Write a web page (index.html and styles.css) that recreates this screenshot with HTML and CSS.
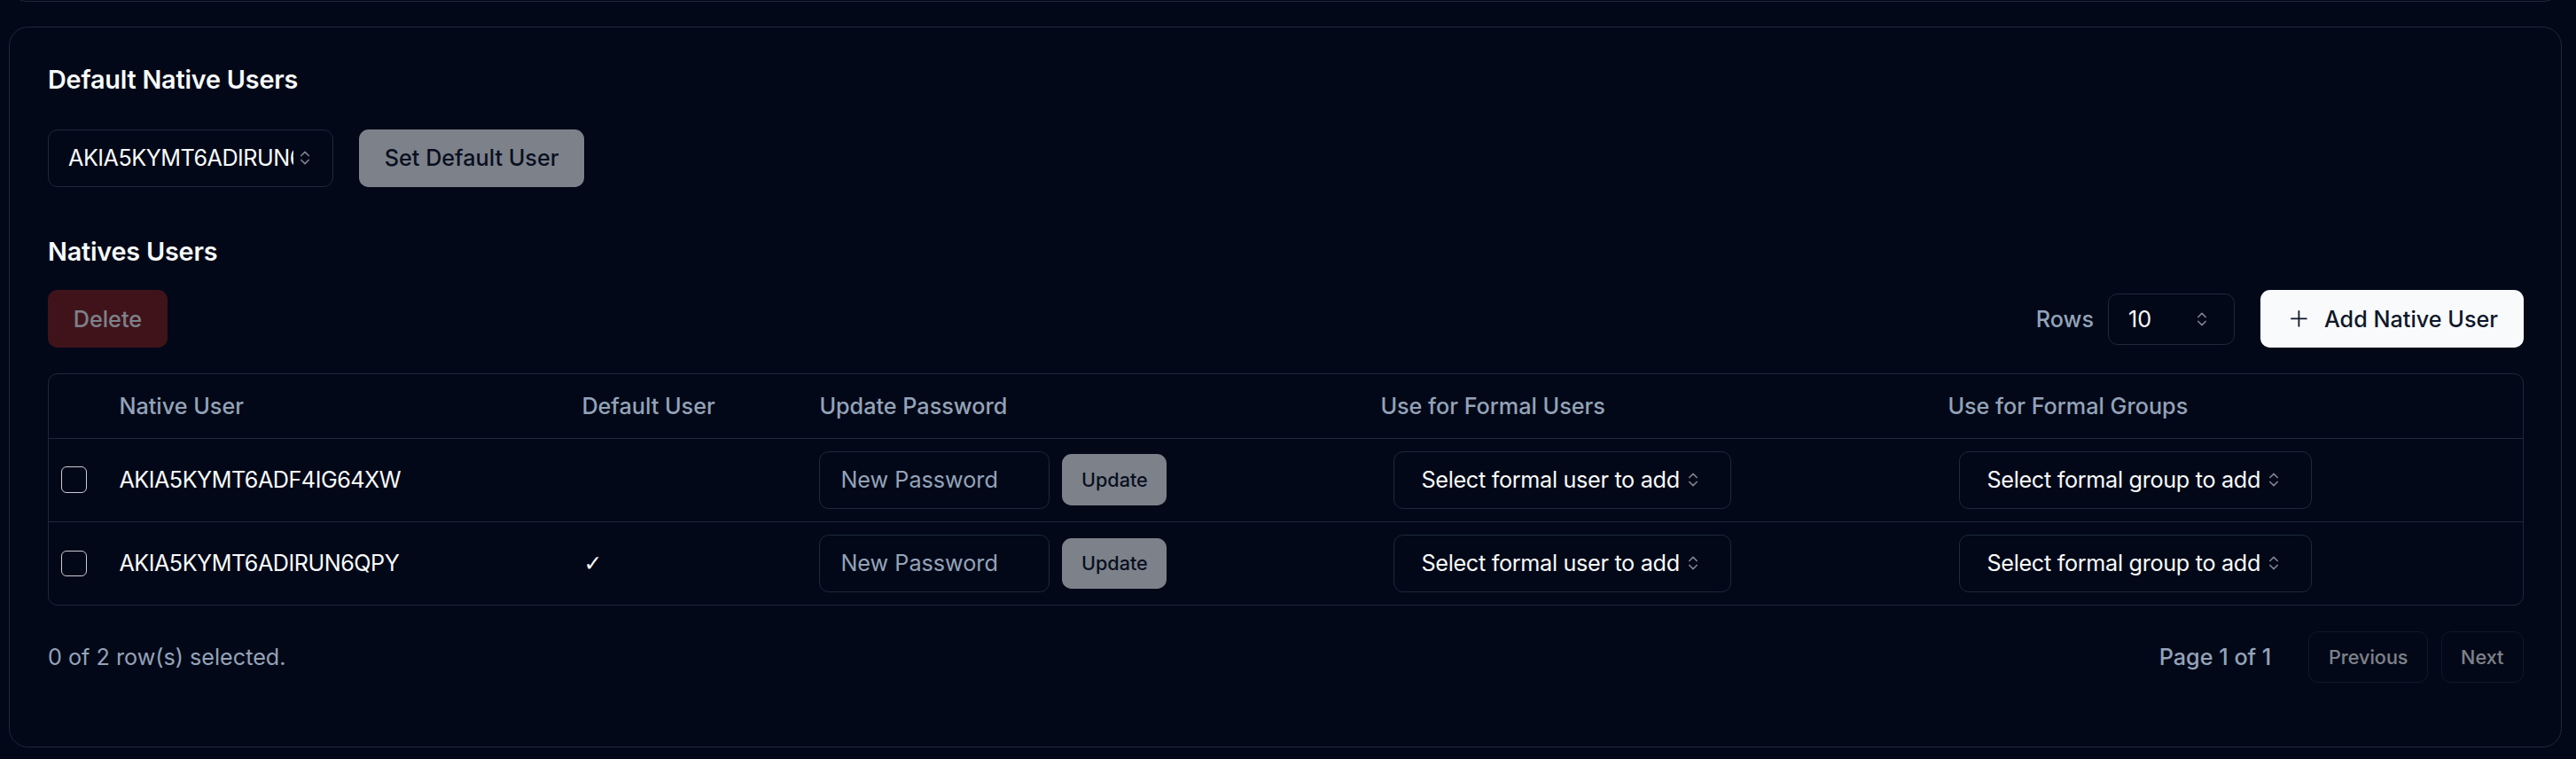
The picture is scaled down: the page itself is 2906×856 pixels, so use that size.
FILE: index.html
```html
<!DOCTYPE html>
<html lang="en">
<head>
<meta charset="utf-8">
<title>Native Users</title>
<link rel="stylesheet" href="styles.css">
</head>
<body>
<div class="page">
  <div class="prev-card"></div>
  <section class="card">
    <h2 class="card-title">Default Native Users</h2>
    <div class="default-row">
      <div class="select select-default">
        <span class="select-value id-text">AKIA5KYMT6ADIRUN6QPY</span>
        <svg class="chev" viewBox="0 0 24 24" fill="none" stroke="currentColor" stroke-width="2" stroke-linecap="round" stroke-linejoin="round"><path d="m7 15 5 5 5-5"/><path d="m7 9 5-5 5 5"/></svg>
      </div>
      <button class="btn btn-primary is-disabled">Set Default User</button>
    </div>

    <h2 class="card-title section-title">Natives Users</h2>
    <div class="toolbar">
      <button class="btn btn-destructive is-disabled">Delete</button>
      <div class="toolbar-right">
        <span class="rows-label">Rows</span>
        <div class="select select-rows">
          <span>10</span>
          <svg class="chev" viewBox="0 0 24 24" fill="none" stroke="currentColor" stroke-width="2" stroke-linecap="round" stroke-linejoin="round"><path d="m7 15 5 5 5-5"/><path d="m7 9 5-5 5 5"/></svg>
        </div>
        <button class="btn btn-white">
          <svg class="plus" viewBox="0 0 24 24" fill="none" stroke="currentColor" stroke-width="1.5" stroke-linecap="round"><path d="M5 12h14"/><path d="M12 5v14"/></svg>
          <span>Add Native User</span>
        </button>
      </div>
    </div>

    <div class="table-wrap">
      <table class="table">
        <colgroup>
          <col class="c-check"><col class="c-user"><col class="c-default"><col class="c-pass"><col class="c-fusers"><col>
        </colgroup>
        <thead>
          <tr>
            <th></th>
            <th>Native User</th>
            <th>Default User</th>
            <th>Update Password</th>
            <th>Use for Formal Users</th>
            <th>Use for Formal Groups</th>
          </tr>
        </thead>
        <tbody>
          <tr>
            <td><span class="checkbox"></span></td>
            <td class="id-text">AKIA5KYMT6ADF4IG64XW</td>
            <td></td>
            <td>
              <div class="pass-cell">
                <input class="input" type="password" placeholder="New Password">
                <button class="btn btn-sm btn-primary is-disabled">Update</button>
              </div>
            </td>
            <td>
              <div class="select select-formal select-fusers">
                <span>Select formal user to add</span>
                <svg class="chev" viewBox="0 0 24 24" fill="none" stroke="currentColor" stroke-width="2" stroke-linecap="round" stroke-linejoin="round"><path d="m7 15 5 5 5-5"/><path d="m7 9 5-5 5 5"/></svg>
              </div>
            </td>
            <td>
              <div class="select select-formal select-fgroups">
                <span>Select formal group to add</span>
                <svg class="chev" viewBox="0 0 24 24" fill="none" stroke="currentColor" stroke-width="2" stroke-linecap="round" stroke-linejoin="round"><path d="m7 15 5 5 5-5"/><path d="m7 9 5-5 5 5"/></svg>
              </div>
            </td>
          </tr>
          <tr>
            <td><span class="checkbox"></span></td>
            <td class="id-text">AKIA5KYMT6ADIRUN6QPY</td>
            <td><span class="tick">✓</span></td>
            <td>
              <div class="pass-cell">
                <input class="input" type="password" placeholder="New Password">
                <button class="btn btn-sm btn-primary is-disabled">Update</button>
              </div>
            </td>
            <td>
              <div class="select select-formal select-fusers">
                <span>Select formal user to add</span>
                <svg class="chev" viewBox="0 0 24 24" fill="none" stroke="currentColor" stroke-width="2" stroke-linecap="round" stroke-linejoin="round"><path d="m7 15 5 5 5-5"/><path d="m7 9 5-5 5 5"/></svg>
              </div>
            </td>
            <td>
              <div class="select select-formal select-fgroups">
                <span>Select formal group to add</span>
                <svg class="chev" viewBox="0 0 24 24" fill="none" stroke="currentColor" stroke-width="2" stroke-linecap="round" stroke-linejoin="round"><path d="m7 15 5 5 5-5"/><path d="m7 9 5-5 5 5"/></svg>
              </div>
            </td>
          </tr>
        </tbody>
      </table>
    </div>

    <div class="footer">
      <span class="muted">0 of 2 row(s) selected.</span>
      <div class="pager">
        <span class="page-info">Page 1 of 1</span>
        <div class="pager-buttons">
          <button class="btn btn-sm btn-outline is-disabled">Previous</button>
          <button class="btn btn-sm btn-outline is-disabled">Next</button>
        </div>
      </div>
    </div>
  </section>
</div>
</body>
</html>
```

FILE: styles.css
```css
* { box-sizing: border-box; }

html, body {
  margin: 0;
  background: #020817;
  color: #f8fafc;
  font-family: Inter, "Noto Sans", sans-serif;
  font-size: 25.2px;
  overflow: hidden;
}

.page {
  padding: 0 16px 0 10px;
  display: flex;
  flex-direction: column;
}

.prev-card {
  height: 41px;
  margin-top: -39px;
  margin-bottom: 28px;
  border: 1px solid #1e293b;
  border-radius: 21.6px;
}

.card {
  border: 1px solid #1e293b;
  border-radius: 21.6px;
  padding: 45px 42px 43px 43px;
  display: flex;
  flex-direction: column;
}

.card-title {
  margin: 0;
  font-size: 28.8px;
  line-height: 1;
  font-weight: 600;
  letter-spacing: -0.2px;
}

.section-title { margin-top: 59px; }

.default-row {
  margin-top: 41px;
  display: flex;
  gap: 29px;
  align-items: center;
}

.id-text { letter-spacing: -0.5px; }

/* Buttons */
.btn {
  font-family: inherit;
  font-size: 25.2px;
  font-weight: 500;
  height: 64.8px;
  padding: 0 28.8px;
  border: none;
  border-radius: 10.8px;
  display: inline-flex;
  align-items: center;
  justify-content: center;
  white-space: nowrap;
}
.btn-sm {
  height: 57.6px;
  padding: 0 21.6px;
  font-size: 21.6px;
}
.btn-primary { background: #f8fafc; color: #0f172a; }
.btn-white { background: #f8fafc; color: #0f172a; padding: 0 29px 0 28.8px; gap: 14.4px; }
.btn-destructive { background: #7f1d1d; color: #f8fafc; }
.btn-outline { background: transparent; border: 1px solid #1e293b; color: #f8fafc; }
.is-disabled { opacity: 0.5; }

.plus { width: 28.8px; height: 28.8px; }

/* Selects */
.select {
  height: 64.8px;
  border: 1px solid #1e293b;
  border-radius: 10.8px;
  display: flex;
  align-items: center;
  color: #f8fafc;
  white-space: nowrap;
}
.chev {
  width: 20px;
  height: 20px;
  flex: none;
  color: #f8fafc;
  opacity: 0.5;
}
.select-default {
  width: 322px;
  padding: 0 22px;
  gap: 3px;
}
.select-value {
  width: 254px;
  overflow: hidden;
  flex: none;
}
.select-rows {
  width: 143px;
  height: 57.6px;
  padding: 0 26px 0 22px;
  justify-content: space-between;
}
.select-formal {
  display: inline-flex;
  margin-left: 15px;
  padding: 0 0 0 30px;
  gap: 5px;
  letter-spacing: -0.3px;
}
.select-fusers { width: 381px; }
.select-fgroups { width: 398px; margin-left: 13px; }

/* Toolbar */
.toolbar {
  margin-top: 29px;
  display: flex;
  justify-content: space-between;
  align-items: center;
}
.toolbar-right {
  display: flex;
  align-items: center;
}
.rows-label {
  color: #94a3b8;
  font-weight: 500;
  margin-right: 16px;
}
.select-rows { margin-right: 29px; }

/* Table */
.table-wrap {
  margin-top: 29px;
  border: 1px solid #1e293b;
  border-radius: 10.8px;
  overflow: hidden;
}
.table {
  width: 100%;
  border-collapse: collapse;
  table-layout: fixed;
}
.c-check { width: 65px; }
.c-user { width: 522px; }
.c-default { width: 268px; }
.c-pass { width: 633px; }
.c-fusers { width: 640px; }

.table th {
  height: 72px;
  padding: 0 14.4px;
  text-align: left;
  font-weight: 500;
  color: #94a3b8;
  border-bottom: 1px solid #1e293b;
  white-space: nowrap;
}
.table td {
  height: 94px;
  padding: 0 14.4px;
  vertical-align: middle;
  white-space: nowrap;
}
.table tbody tr + tr td { border-top: 1px solid #1e293b; }

.checkbox {
  display: block;
  width: 28.8px;
  height: 29.5px;
  border: 1.5px solid #c8ccd3;
  border-radius: 6px;
}

.tick {
  font-family: "DejaVu Sans", sans-serif;
  font-size: 25px;
  margin-left: 2px;
}

.pass-cell {
  display: flex;
  align-items: center;
  gap: 14px;
}
.input {
  width: 260px;
  height: 64.8px;
  border: 1px solid #1e293b;
  border-radius: 10.8px;
  background: transparent;
  padding: 0 23px;
  font-family: inherit;
  font-size: 25.2px;
  color: #f8fafc;
  outline: none;
}
.input::placeholder { color: #94a3b8; }

/* Footer */
.footer {
  padding: 29px 0;
  display: flex;
  justify-content: space-between;
  align-items: center;
}
.muted { color: #94a3b8; }
.pager {
  display: flex;
  align-items: center;
  gap: 42px;
}
.page-info { color: #94a3b8; font-weight: 500; }
.pager-buttons {
  display: flex;
  gap: 14.4px;
}
```
